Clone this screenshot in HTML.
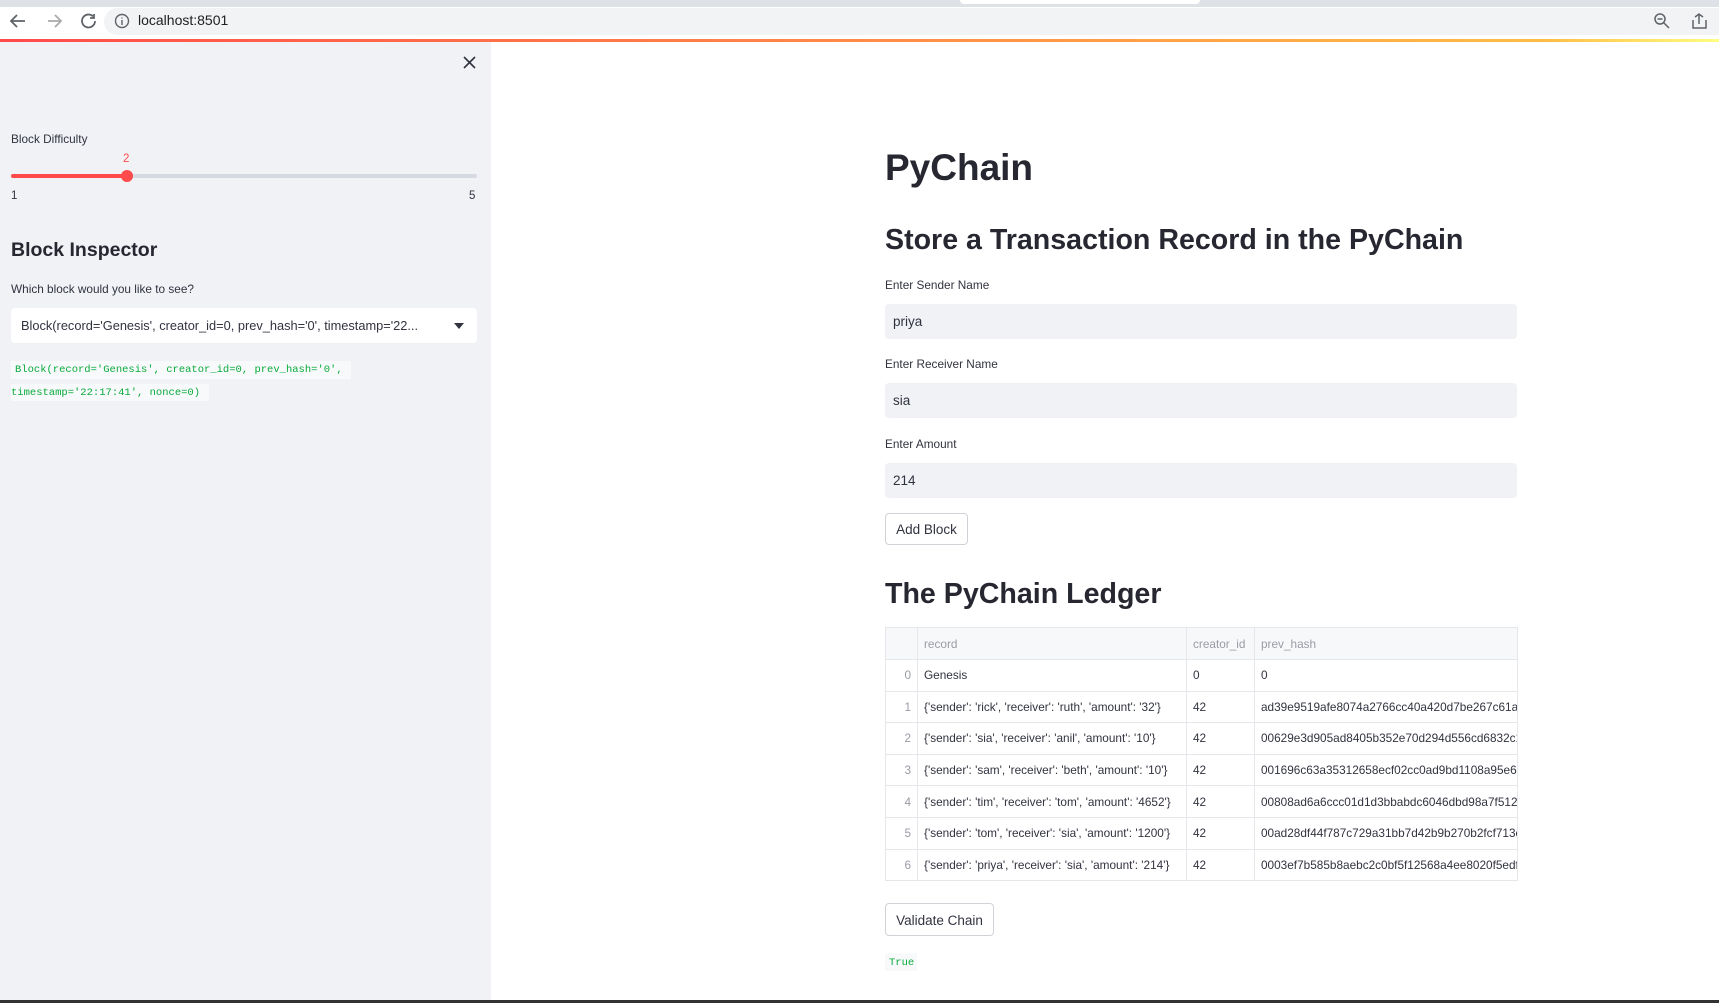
<!DOCTYPE html>
<html><head><meta charset="utf-8"><style>
*{margin:0;padding:0;box-sizing:border-box}
body{width:1719px;height:1003px;overflow:hidden;background:#fff;font-family:"Liberation Sans",sans-serif;color:#31333f;position:relative}
.a{position:absolute}
.top{left:0;top:0;width:1719px;height:40px;background:#fff}
.tabs{left:0;top:0;width:1719px;height:7px;background:#dee1e6}
.url{left:104px;top:8px;width:1615px;height:27px;background:#f1f3f4;border-radius:14px 0 0 14px}
.grad{left:0;top:39px;width:1719px;height:3px;background:linear-gradient(90deg,#ff4b4b,#ffbd45 90%,#fffd80)}
.side{left:0;top:42px;width:491px;height:958px;background:#f0f2f6}
.lbl{font-size:11.8px;color:#31333f}
.inp{left:885px;width:632px;height:35px;background:#f0f2f6;border-radius:4px;font-size:13.5px;padding:10px 8px;color:#31333f}
.btn{border:1px solid #d0d2d8;border-radius:4px;background:#fff;font-size:13.5px;text-align:center}
h1,h2,h3{position:absolute;font-weight:bold;color:#262730;white-space:nowrap}
table{border-collapse:collapse;font-size:11.8px;table-layout:fixed}
td,th{border:1px solid #e6e7ea;height:31.6px;padding:0 6px;white-space:nowrap;overflow:hidden;text-align:left;font-weight:normal}
th{color:#9a9ca5;background:#f7f8fa;height:32px}
td.i{color:#9a9ca5;text-align:right}
.code{font-family:"Liberation Mono",monospace;font-size:10.5px;color:#09ab3b;background:#f8f9fb}
</style></head><body>
<div class="a top"></div><div class="a tabs"></div>
<div class="a" style="left:960px;top:0;width:240px;height:4px;background:#fff;border-radius:0 0 6px 6px"></div>
<div class="a url"></div>
<svg class="a" style="left:8px;top:11px" width="90" height="20" viewBox="0 0 90 20" fill="none" stroke-width="1.8">
<path d="M17 10H4M9 4L3 10l6 6" stroke="#5f6368"/>
<path d="M40 10h13M47 4l6 6-6 6" stroke="#aaa"/>
<path d="M87 10a6.5 6.5 0 1 1-2-4.7" stroke="#5f6368"/><path d="M86 3v4h-4" stroke="#5f6368"/>
</svg>
<svg class="a" style="left:114px;top:13px" width="16" height="16" viewBox="0 0 16 16" fill="none" stroke="#5f6368" stroke-width="1.4"><circle cx="8" cy="8" r="6.5"/><path d="M8 7v5M8 4.5v1"/></svg>
<div class="a" style="left:138px;top:12px;font-size:14px;color:#202124">localhost:8501</div>
<svg class="a" style="left:1653px;top:12px" width="60" height="18" viewBox="0 0 60 18" fill="none" stroke="#5f6368" stroke-width="1.5"><circle cx="7" cy="7" r="5"/><path d="M11 11l5 5M4.5 7h5"/><path d="M40 8v8h13V8M46 12V2M42 5l4-3 4 3"/></svg>
<div class="a grad"></div>
<div class="a side"></div>
<svg class="a" style="left:463px;top:56px" width="13" height="13" viewBox="0 0 13 13" stroke="#31333f" stroke-width="1.6"><path d="M1 1l11 11M12 1L1 12"/></svg>
<div class="a lbl" style="left:11px;top:132px">Block Difficulty</div>
<div class="a" style="left:123px;top:153px;font-size:11.5px;color:#ff4b4b">2</div>
<div class="a" style="left:11px;top:174px;width:466px;height:4px;background:#d5d9e2;border-radius:2px"></div>
<div class="a" style="left:11px;top:174px;width:116px;height:4px;background:#ff4b4b;border-radius:2px"></div>
<div class="a" style="left:121px;top:170px;width:12px;height:12px;background:#ff4b4b;border-radius:50%"></div>
<div class="a" style="left:11px;top:190px;font-size:11.5px">1</div>
<div class="a" style="left:469px;top:190px;font-size:11.5px">5</div>
<h3 style="left:11px;top:239px;font-size:19.5px">Block Inspector</h3>
<div class="a lbl" style="left:11px;top:282px">Which block would you like to see?</div>
<div class="a" style="left:11px;top:308px;width:466px;height:35px;background:#fff;border-radius:4px;font-size:12.8px;padding:10px 10px;white-space:nowrap">Block(record='Genesis', creator_id=0, prev_hash='0', timestamp='22...</div>
<svg class="a" style="left:454px;top:323px" width="10" height="6"><path d="M0 0h10L5 6z" fill="#31333f"/></svg>
<div class="a code" style="left:11px;top:361px;padding:3px 4px;width:340px;height:18px">Block(record='Genesis', creator_id=0, prev_hash='0',</div>
<div class="a code" style="left:11px;top:384px;padding:3px 0;width:198px;height:17px">timestamp='22:17:41', nonce=0)</div>

<h1 style="left:885px;top:147px;font-size:37px">PyChain</h1>
<h2 style="left:885px;top:224px;font-size:28.6px">Store a Transaction Record in the PyChain</h2>
<div class="a lbl" style="left:885px;top:278px">Enter Sender Name</div>
<div class="a inp" style="top:304px">priya</div>
<div class="a lbl" style="left:885px;top:357px">Enter Receiver Name</div>
<div class="a inp" style="top:383px">sia</div>
<div class="a lbl" style="left:885px;top:437px">Enter Amount</div>
<div class="a inp" style="top:463px">214</div>
<div class="a btn" style="left:885px;top:513px;width:83px;height:32px;padding-top:8px">Add Block</div>
<h2 style="left:885px;top:578px;font-size:28.6px">The PyChain Ledger</h2>
<table class="a" style="left:885px;top:627px;width:632px">
<colgroup><col style="width:32px"><col style="width:269px"><col style="width:68px"><col style="width:263px"></colgroup>
<tr><th></th><th>record</th><th>creator_id</th><th>prev_hash</th></tr>
<tr><td class="i">0</td><td>Genesis</td><td>0</td><td>0</td></tr>
<tr><td class="i">1</td><td>{'sender': 'rick', 'receiver': 'ruth', 'amount': '32'}</td><td>42</td><td>ad39e9519afe8074a2766cc40a420d7be267c61ad</td></tr>
<tr><td class="i">2</td><td>{'sender': 'sia', 'receiver': 'anil', 'amount': '10'}</td><td>42</td><td>00629e3d905ad8405b352e70d294d556cd6832c17</td></tr>
<tr><td class="i">3</td><td>{'sender': 'sam', 'receiver': 'beth', 'amount': '10'}</td><td>42</td><td>001696c63a35312658ecf02cc0ad9bd1108a95e6c</td></tr>
<tr><td class="i">4</td><td>{'sender': 'tim', 'receiver': 'tom', 'amount': '4652'}</td><td>42</td><td>00808ad6a6ccc01d1d3bbabdc6046dbd98a7f5122</td></tr>
<tr><td class="i">5</td><td>{'sender': 'tom', 'receiver': 'sia', 'amount': '1200'}</td><td>42</td><td>00ad28df44f787c729a31bb7d42b9b270b2fcf713c</td></tr>
<tr><td class="i">6</td><td>{'sender': 'priya', 'receiver': 'sia', 'amount': '214'}</td><td>42</td><td>0003ef7b585b8aebc2c0bf5f12568a4ee8020f5edf</td></tr>
</table>
<div class="a btn" style="left:885px;top:903px;width:109px;height:33px;padding-top:9px">Validate Chain</div>
<div class="a code" style="left:885px;top:953px;padding:4px 4px;width:32px;height:18px">True</div>
<div class="a" style="left:0;top:1000px;width:1719px;height:3px;background:#333"></div>
</body></html>
